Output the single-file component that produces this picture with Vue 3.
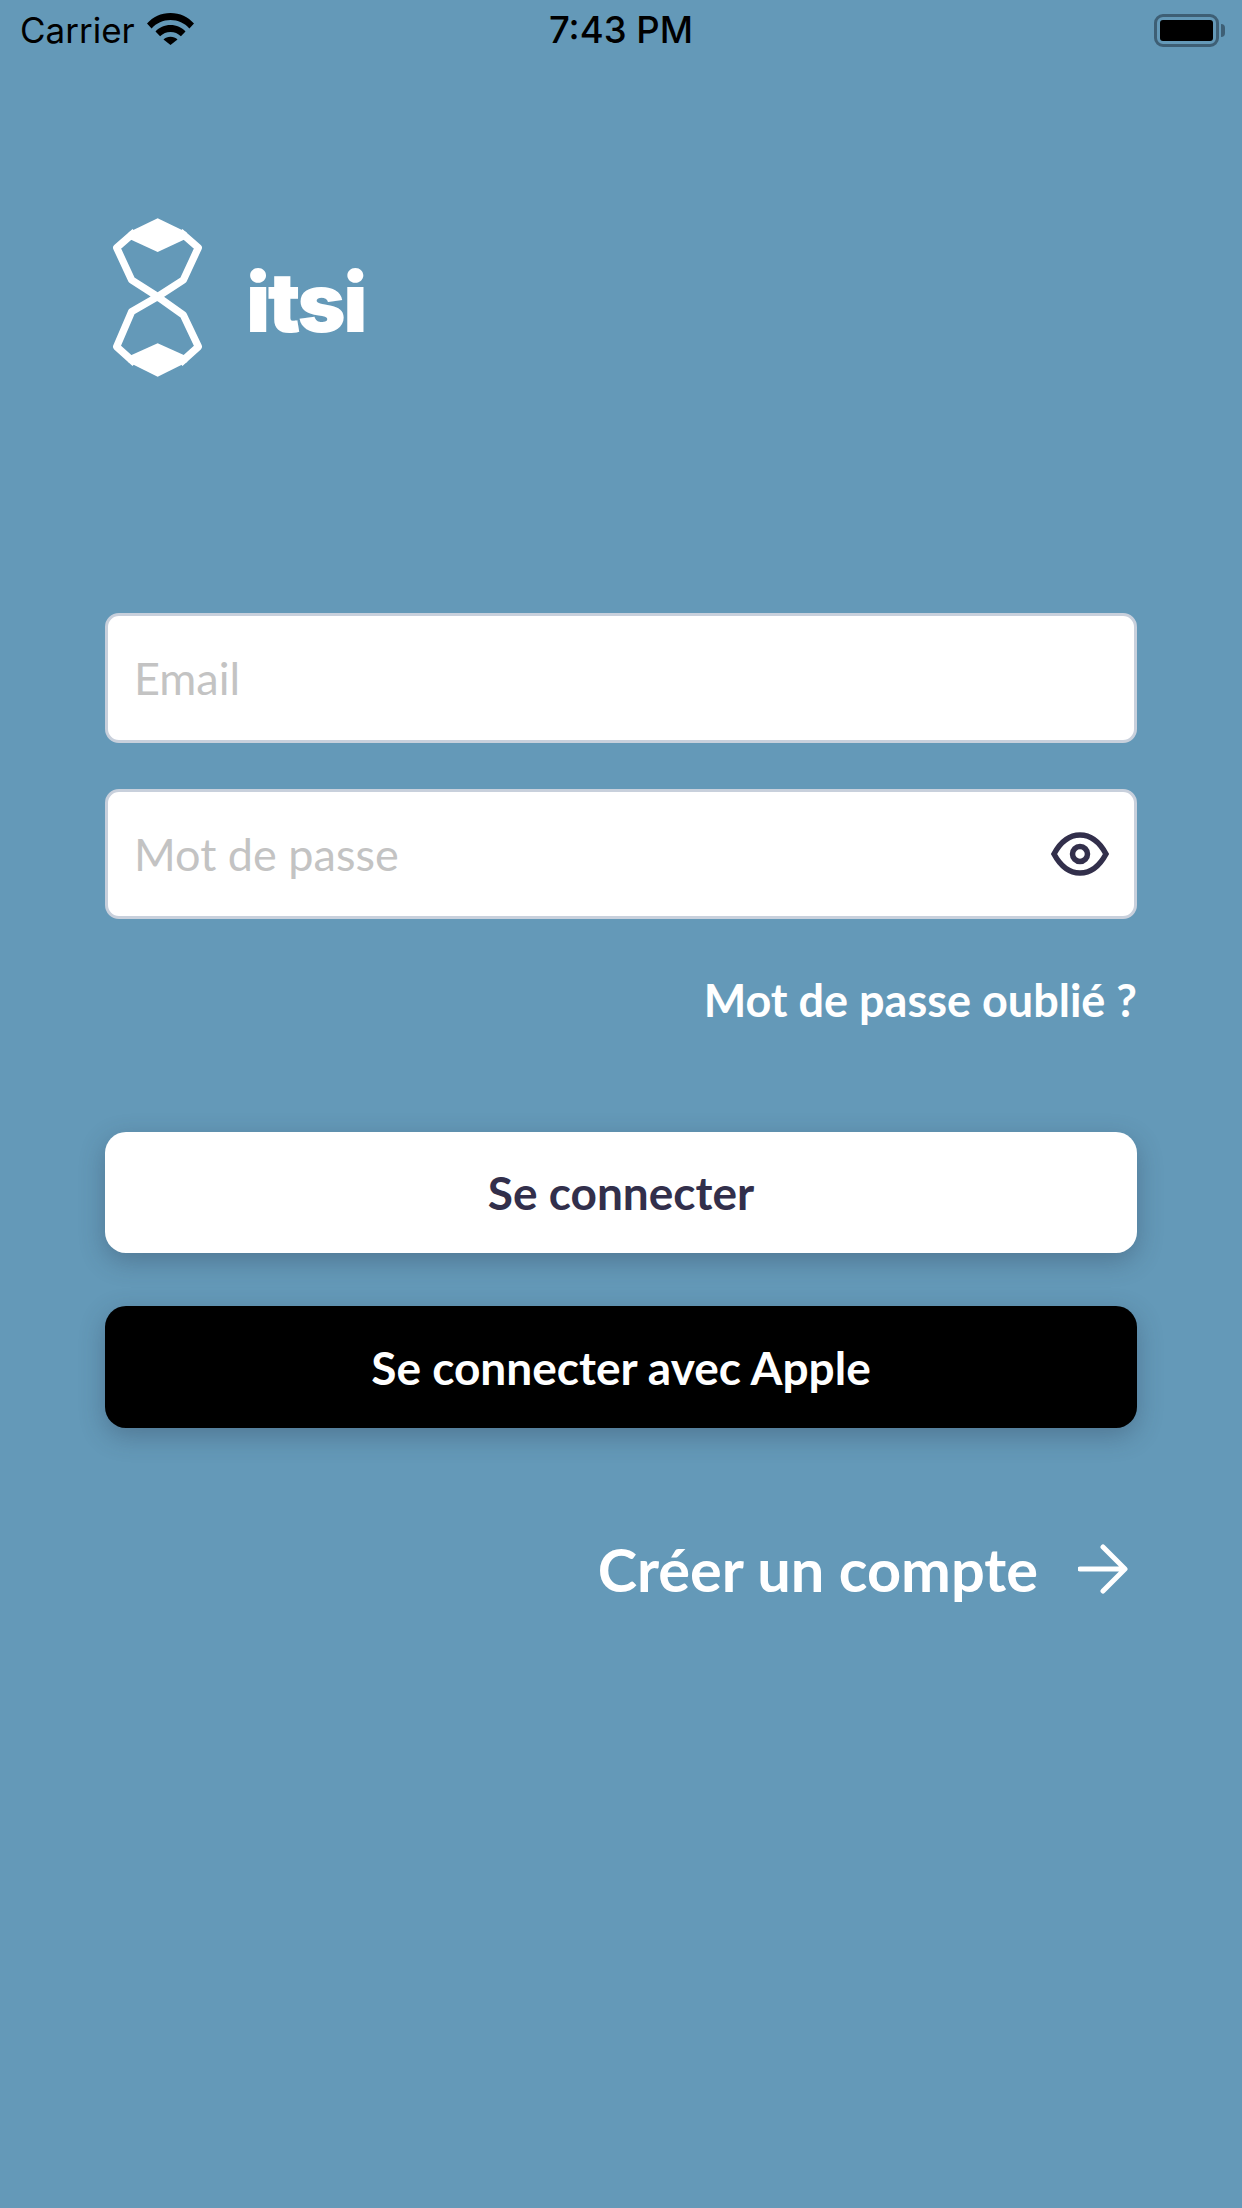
<script setup>
const fields = [{ label: 'Email', eye: false }, { label: 'Mot de passe', eye: true }]
</script>

<template>
  <main class="page">
    <header class="status">
      <div class="status-left">
        <span>Carrier</span>
        <svg class="wifi" viewBox="0 0 47 32" aria-hidden="true">
          <path d="M0 10.5C6 4 14 0 23.5 0S41 4 47 10.5l-4.6 5C37.500 10 31 7 23.500 7S9.500 10 4.600 15.500Z" />
          <path d="M8.500 18.500C12 14.500 17.500 12 23.500 12s11.500 2.500 15 6.500l-4.600 4.800C31 20.500 27.500 19 23.500 19s-7.500 1.500-10.400 4.300Z" />
          <path d="M16.500 26.500c1.800-1.800 4.300-2.800 7-2.800s5.200 1 7 2.800L23.500 32Z" />
        </svg>
      </div>
      <span class="time">7:43 PM</span>
      <div class="battery"><i></i></div>
    </header>

    <div class="brand">
      <svg class="mark" viewBox="60 45 285 495" aria-hidden="true">
        <path class="mark-line" d="M135 95 80 143 125 240 203 290 280 345 325 440 270 490M270 95 325 143 280 240 203 290 125 335 80 440 135 490" />
        <path class="mark-cap" d="M203 55 290 97 285 118 203 156 120 118 116 97Z" />
        <path class="mark-cap" d="M203 430 288 468 292 486 203 530 114 486 118 468Z" />
      </svg>
      <span class="wordmark">itsi</span>
    </div>

    <form class="form" @submit.prevent>
      <div v-for="field in fields" :key="field.label" class="field">
        <span>{{ field.label }}</span>
        <svg v-if="field.eye" class="eye" viewBox="0 0 58 44" aria-hidden="true">
          <path d="M3 22C10 9 18 3 29 3s19 6 26 19c-7 13-15 19-26 19S10 35 3 22Z" />
          <circle cx="29" cy="22" r="7.500" />
        </svg>
      </div>
      <a class="forgot">Mot de passe oublié ?</a>
      <button class="btn btn-light" type="button">Se connecter</button>
      <button class="btn btn-dark" type="button">Se connecter avec Apple</button>
      <a class="create">
        <span>Créer un compte</span>
        <svg viewBox="0 0 50 50" aria-hidden="true">
          <path d="M2 25H46M25 3 47 25 25 47" />
        </svg>
      </a>
    </form>
  </main>
</template>

<style>
html, body { margin: 0; background: #6499b8; }
</style>

<style scoped>
.page {
  box-sizing: border-box;
  width: 1242px;
  height: 2208px;
  background: #6499b8;
  overflow: hidden;
  font-family: Lato, "Liberation Sans", sans-serif;
}
.status {
  display: grid;
  grid-template-columns: 1fr auto 1fr;
  align-items: center;
  height: 60px;
  padding: 0 20px;
  font: 35px/60px Inter, "Liberation Sans", sans-serif;
  color: #000;
}
.status-left { display: flex; align-items: center; gap: 12px; }
.wifi { width: 47px; height: 32px; margin-top: -3px; }
.wifi path { fill: #000; }
.time { font-size: 36.500px; font-weight: 500; }
.battery {
  position: relative;
  justify-self: end;
  box-sizing: border-box;
  width: 65px;
  height: 33px;
  margin-right: 3px;
  padding: 3px;
  border: 3px solid #3e5f75;
  border-radius: 9px;
}
.battery::after {
  content: "";
  position: absolute;
  right: -9px;
  top: 7px;
  width: 4px;
  height: 13px;
  background: #3e5f75;
  border-radius: 0 4px 4px 0;
}
.battery i { display: block; height: 100%; background: #000; border-radius: 3px; }
.brand {
  display: flex;
  align-items: center;
  gap: 41px;
  margin: 156px 0 0 110px;
  height: 162px;
}
.mark { width: 95px; height: 165px; flex: none; }
.mark-line { fill: none; stroke: #fff; stroke-width: 22; stroke-linejoin: round; }
.mark-cap { fill: #fff; }
.wordmark {
  margin-top: 12px;
  font: 900 82px/1 Inter, sans-serif;
  color: #fff;
  letter-spacing: -2.500px;
}
.form {
  display: flex;
  flex-direction: column;
  margin: 235px 105px 0;
}
.field {
  box-sizing: border-box;
  display: flex;
  align-items: center;
  justify-content: space-between;
  height: 130px;
  margin-bottom: 46px;
  padding: 0 26px;
  background: #fff;
  border: 3px solid #c8d0dc;
  border-radius: 14px;
  font-size: 45px;
  color: #c3c3c3;
}
.eye { width: 58px; height: 44px; fill: none; stroke: #322f4b; stroke-width: 5.500; margin-right: -1px; }
.forgot {
  margin-top: 8px;
  text-align: right;
  font-size: 45px;
  line-height: 54px;
  font-weight: 700;
  color: #fff;
}
.btn {
  height: 121px;
  padding: 0;
  border: 0;
  border-radius: 21px;
  font: 700 46px Lato, sans-serif;
  box-shadow: 0 8px 26px rgba(40, 50, 70, 0.32);
}
.btn-light { margin-top: 105px; background: #fff; color: #322f4b; }
.btn-dark { margin-top: 53px; height: 122px; background: #000; color: #fff; }
.create {
  display: flex;
  align-items: center;
  justify-content: flex-end;
  gap: 40px;
  margin-top: 105px;
  padding-right: 9px;
  font-size: 59.500px;
  line-height: 72px;
  font-weight: 700;
  color: #fff;
}
.create svg { width: 50px; height: 50px; fill: none; stroke: #fff; stroke-width: 5; stroke-linecap: round; stroke-linejoin: round; }
</style>
